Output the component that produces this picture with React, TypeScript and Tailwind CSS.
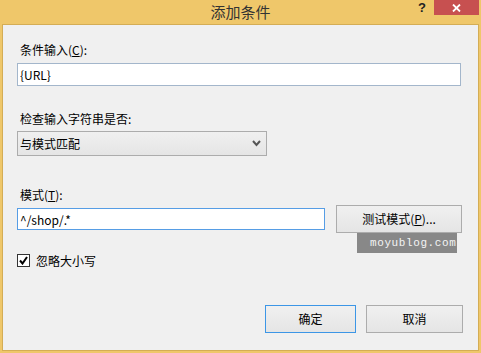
import React, { useState } from 'react';

const font = { fontFamily: '"Noto Sans CJK SC", "Noto Sans", sans-serif' };

export default function App() {
  const [condition, setCondition] = useState('{URL}');
  const [pattern, setPattern] = useState('^/shop/.*');
  const [ignoreCase, setIgnoreCase] = useState(true);

  return (
    <div
      className="w-[481px] h-[353px] bg-[#efc76a] flex flex-col text-black text-[12px] overflow-hidden"
      style={font}
    >
      {/* Title bar */}
      <div className="relative h-[24px] shrink-0 flex items-center justify-center">
        <span className="text-[15px] leading-none text-[#333] mt-[-2px]">添加条件</span>
        <span
          className="absolute left-[416px] top-0 w-[12px] text-[13px] font-bold leading-[16px] text-[#222] text-center"
          style={{ fontFamily: '"Liberation Sans", Arial, sans-serif' }}
        >
          ?
        </span>
        <button className="absolute left-[434px] top-0 w-[45px] h-[15px] bg-[#c75050] flex items-center justify-center">
          <svg width="9" height="8" viewBox="0 0 9 8">
            <path d="M1 0.5 L8 7.5 M8 0.5 L1 7.5" stroke="#fff" strokeWidth="1.8" />
          </svg>
        </button>
      </div>

      {/* Body */}
      <div className="mx-[2px] w-[477px] h-[327px] shrink-0 border border-[#d4ad55] bg-[#f0f0f0] pl-[14px] pr-[15px] pt-[17px] flex flex-col">
        <label className="h-[16px] leading-[16px] pl-[3px]">
          条件输入(<span className="underline">C</span>):
        </label>
        <input
          value={condition}
          onChange={(e) => setCondition(e.target.value)}
          className="mt-[5px] w-[444px] h-[23px] border border-[#a3b6cb] bg-white px-[2px] outline-none text-[12px]"
          style={font}
        />

        <label className="mt-[25px] h-[16px] leading-[16px] pl-[3px]">检查输入字符串是否:</label>
        <div className="mt-[4px] w-[250px] h-[25px] border border-[#acacac] bg-gradient-to-b from-[#f0f0f0] to-[#e5e5e5] flex items-center justify-between pl-[2px] pr-[5px]">
          <span>与模式匹配</span>
          <svg width="9" height="7" viewBox="0 0 9 7">
            <path d="M1 1 L4.5 5 L8 1" stroke="#555" strokeWidth="2" fill="none" />
          </svg>
        </div>

        <label className="mt-[31px] h-[16px] leading-[16px] pl-[3px]">
          模式(<span className="underline">T</span>):
        </label>
        <div className="mt-[2px] h-[28px] flex items-center">
          <input
            value={pattern}
            onChange={(e) => setPattern(e.target.value)}
            className="w-[308px] h-[22px] border border-[#569de5] bg-white px-[2px] outline-none text-[12px]"
            style={font}
          />
          <div className="relative ml-[11px]">
            <button className="w-[126px] h-[28px] border border-[#acacac] bg-gradient-to-b from-[#f0f0f0] to-[#e5e5e5]">
              测试模式(<span className="underline">P</span>)...
            </button>
            <div
              className="absolute left-[21px] top-[28px] w-[100px] h-[20px] bg-[#888888] text-[#f4f4f4] text-[11px] leading-[20px] tracking-[0.6px] pl-[13px]"
              style={{ fontFamily: '"Liberation Mono", "DejaVu Sans Mono", monospace' }}
            >
              moyublog.com
            </div>
          </div>
        </div>

        <label className="mt-[21px] flex items-center h-[13px] cursor-pointer">
          <span
            onClick={() => setIgnoreCase(!ignoreCase)}
            className="w-[13px] h-[13px] border border-[#333] bg-white flex items-center justify-center"
          >
            {ignoreCase && (
              <svg width="9" height="9" viewBox="0 0 9 9">
                <path d="M1 4.5 L3.5 7.5 L8 1" stroke="#000" strokeWidth="2" fill="none" />
              </svg>
            )}
          </span>
          <span className="ml-[6px] leading-[16px]">忽略大小写</span>
        </label>

        <div className="mt-[38px] flex justify-end gap-[10px] pr-[0px]">
          <button className="w-[91px] h-[28px] border border-[#3c96e6] bg-gradient-to-b from-[#f0f0f0] to-[#e5e5e5]">
            确定
          </button>
          <button className="w-[97px] h-[28px] border border-[#acacac] bg-gradient-to-b from-[#f0f0f0] to-[#e5e5e5]">
            取消
          </button>
        </div>
      </div>
    </div>
  );
}
